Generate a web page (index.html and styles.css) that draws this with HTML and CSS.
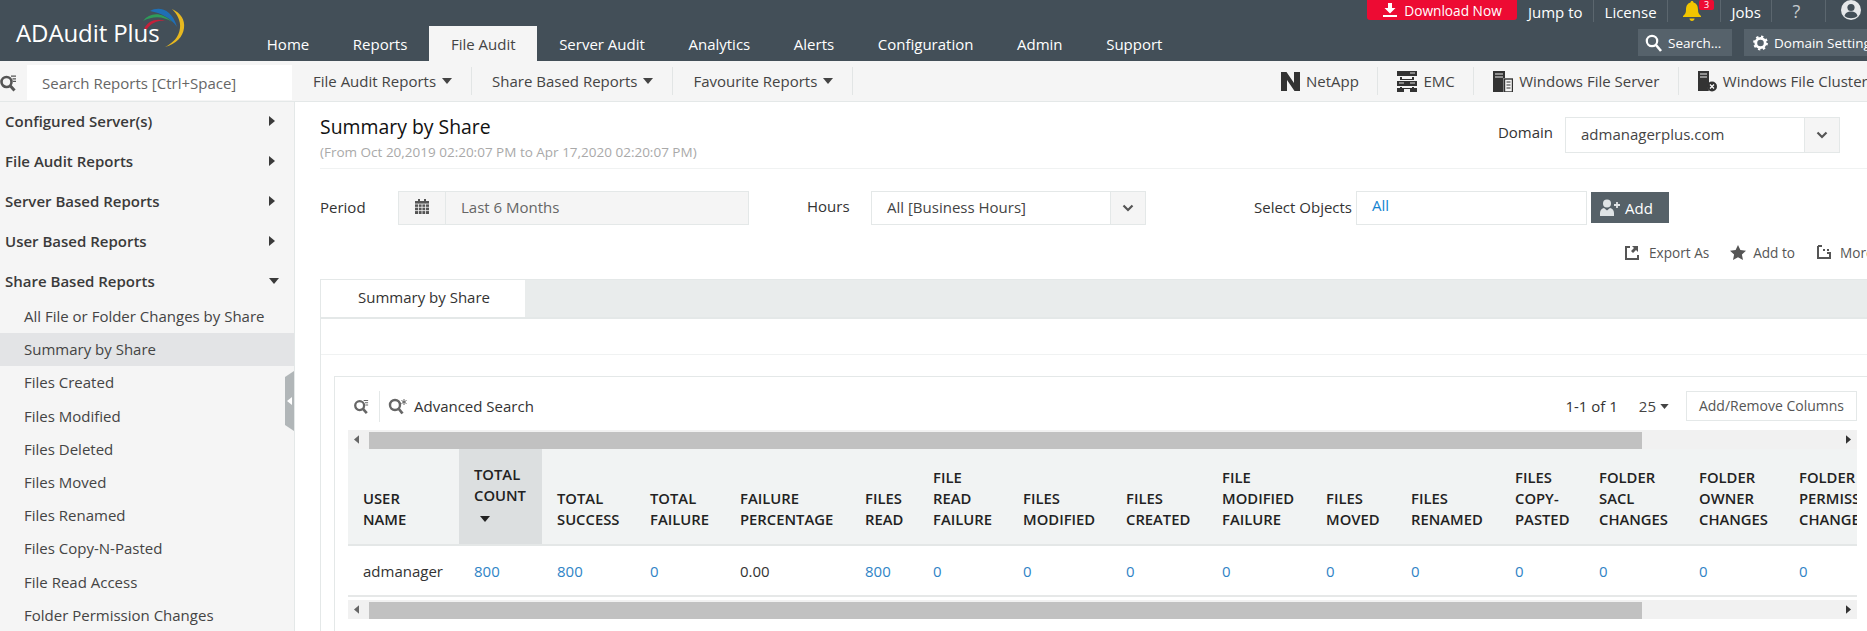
FILE: index.html
```html
<!DOCTYPE html>
<html lang="en">
<head>
<meta charset="utf-8">
<title>ADAudit Plus - Summary by Share</title>
<link rel="stylesheet" href="styles.css">
</head>
<body>
<svg class="defs" width="0" height="0">
  <symbol id="i-qsearch" viewBox="0 0 18 18">
    <circle cx="7.5" cy="8" r="5" fill="none" stroke="currentColor" stroke-width="2.6"/>
    <path d="M11 11.5l4.5 5" stroke="currentColor" stroke-width="3" fill="none"/>
    <path d="M12 2.2h5M13.5 4.8h3.5M14 7.3h3" stroke="currentColor" stroke-width="1.2" fill="none"/>
  </symbol>
  <symbol id="i-caret" viewBox="0 0 10 6"><path d="M0 0h10L5 6z" fill="currentColor"/></symbol>
  <symbol id="i-right" viewBox="0 0 6 10"><path d="M0 0l6 5-6 5z" fill="currentColor"/></symbol>
  <symbol id="i-chev" viewBox="0 0 12 8"><path d="M1.5 1.5L6 6l4.500-4.500" fill="none" stroke="currentColor" stroke-width="2.2"/></symbol>
</svg>

<header class="topbar">
  <div class="logo">
    <span class="logo-text">ADAudit Plus</span>
    <svg class="logo-arc" width="46" height="44" viewBox="0 0 46 44">
      <path d="M3 23C7 14 16 12 25 15c-7-1-14 1-19 8z" fill="#c4213a"/>
      <path d="M2 15C9 6 21 6 31 16c-9-6-19-6-29-1z" fill="#2f9c5a"/>
      <path d="M9 5c9-5 22-2 27 16C30 12 20 7 9 5z" fill="#1f6fb5"/>
      <path d="M31 3c9 4 13 11 12 19-1 9-8 16-19 19 8-4 14-10 15-19 1-7-3-14-8-19z" fill="#e7b820"/>
    </svg>
  </div>
  <nav class="mainnav">
    <a class="nav-item">Home</a>
    <a class="nav-item">Reports</a>
    <a class="nav-item active">File Audit</a>
    <a class="nav-item">Server Audit</a>
    <a class="nav-item">Analytics</a>
    <a class="nav-item">Alerts</a>
    <a class="nav-item">Configuration</a>
    <a class="nav-item">Admin</a>
    <a class="nav-item">Support</a>
  </nav>
  <div class="topright">
    <div class="toplinks">
      <a class="download">
        <svg width="16" height="14" viewBox="0 0 16 14"><path d="M6 0h4v5h3.500L8 10.500 2.500 5H6zM1 12h14v2H1z" fill="#fff"/></svg>
        Download Now
      </a>
      <a class="toplink jump">Jump to</a>
      <a class="toplink">License</a>
      <a class="toplink bell">
        <svg width="18" height="20" viewBox="0 0 18 20"><path d="M9 0c1 0 1.500.7 1.500 1.500C14 2.500 15 5.500 15 9c0 3 1 4.500 3 6v1H0v-1c2-1.500 3-3 3-6 0-3.500 1-6.500 4.500-7.500C7.500.7 8 0 9 0zM6.500 17.500h5C11.500 19 10.500 20 9 20s-2.500-1-2.500-2.500z" fill="#f2c600"/></svg>
        <span class="badge">3</span>
      </a>
      <a class="toplink">Jobs</a>
      <a class="toplink help">?</a>
      <a class="toplink user">
        <svg width="20" height="20" viewBox="0 0 20 20"><circle cx="10" cy="10" r="10" fill="#e6e8ea"/><circle cx="10" cy="7.500" r="3.600" fill="#434f58"/><path d="M3.500 16c1-3.500 3.500-4.500 6.500-4.500s5.500 1 6.500 4.500c-3.500 3-9.500 3-13 0z" fill="#434f58"/></svg>
      </a>
    </div>
    <div class="topbtns">
      <a class="topbtn search-btn">
        <svg width="17" height="18" viewBox="0 0 17 18"><circle cx="7" cy="7" r="5.200" fill="none" stroke="#fff" stroke-width="2.200"/><path d="M11 11l5 6" stroke="#fff" stroke-width="2.600"/></svg>
        Search...
      </a>
      <a class="topbtn domain-btn">
        <svg width="15" height="16" viewBox="0 0 16 16"><circle cx="8" cy="8" r="5" fill="none" stroke="#fff" stroke-width="3"/><circle cx="8" cy="8" r="6.800" fill="none" stroke="#fff" stroke-width="2.200" stroke-dasharray="2.500 2.800"/></svg>
        Domain Settings
      </a>
    </div>
  </div>
</header>

<div class="toolbar">
  <div class="qsearch">
    <svg class="qs-icon" width="18" height="18"><use href="#i-qsearch"/></svg>
    <div class="qs-input">Search Reports [Ctrl+Space]</div>
  </div>
  <div class="menu-item first">File Audit Reports <svg width="10" height="6"><use href="#i-caret"/></svg></div>
  <div class="menu-item">Share Based Reports <svg width="10" height="6"><use href="#i-caret"/></svg></div>
  <div class="menu-item">Favourite Reports <svg width="10" height="6"><use href="#i-caret"/></svg></div>
  <div class="servers">
    <div class="srv">
      <svg width="19" height="21" viewBox="0 0 19 21"><path d="M0 1h5.500L13 12V1h6v19h-5.500L6 9v11H0z" fill="#333"/></svg>
      NetApp
    </div>
    <div class="srv">
      <svg width="20" height="21" viewBox="0 0 20 21"><path d="M0 0h20v5H0zM3 6h2v2h10V6h2v3H3zM0 10h20v5H0zM3 16h2v1h10v-1h2v2H3zM0 17h7v4H0zM13 17h7v4h-7z" fill="#333"/><path d="M13 2h5M2 12h5M13 12h5" stroke="#ddd" stroke-width="1" fill="none"/></svg>
      EMC
    </div>
    <div class="srv">
      <svg width="20" height="21" viewBox="0 0 20 21"><path d="M0 0h12v7h-1.500v14H0z" fill="#333"/><path d="M2 3h8M2 6h8" stroke="#eee" stroke-width="1.200"/><rect x="11.500" y="8" width="8" height="13" fill="#f5f5f5" stroke="#333" stroke-width="1.400"/><path d="M13.500 11h4M13.500 14h4M13.500 17h4" stroke="#333" stroke-width="1.200"/></svg>
      Windows File Server
    </div>
    <div class="srv">
      <svg width="19" height="21" viewBox="0 0 19 21"><path d="M0 0h11v13a6 6 0 0 0 0 7H0z" fill="#333"/><path d="M2 3h7M2 6h7" stroke="#eee" stroke-width="1.200"/><circle cx="14" cy="15.500" r="5" fill="#333"/><path d="M12 13.500l4 4m0-4l-4 4" stroke="#fff" stroke-width="1.200"/></svg>
      Windows File Cluster
    </div>
  </div>
</div>

<div class="layout">
  <aside class="sidebar">
    <div class="side-head">Configured Server(s)<svg width="6" height="10"><use href="#i-right"/></svg></div>
    <div class="side-head">File Audit Reports<svg width="6" height="10"><use href="#i-right"/></svg></div>
    <div class="side-head">Server Based Reports<svg width="6" height="10"><use href="#i-right"/></svg></div>
    <div class="side-head">User Based Reports<svg width="6" height="10"><use href="#i-right"/></svg></div>
    <div class="side-head open">Share Based Reports<svg width="10" height="6"><use href="#i-caret"/></svg></div>
    <ul class="side-list">
      <li>All File or Folder Changes by Share</li>
      <li class="current">Summary by Share</li>
      <li>Files Created</li>
      <li>Files Modified</li>
      <li>Files Deleted</li>
      <li>Files Moved</li>
      <li>Files Renamed</li>
      <li>Files Copy-N-Pasted</li>
      <li>File Read Access</li>
      <li>Folder Permission Changes</li>
    </ul>
    <div class="collapse"><svg width="5" height="8" viewBox="0 0 5 8"><path d="M5 0v8L0 4z" fill="#fff"/></svg></div>
  </aside>

  <main class="content">
    <div class="title-row">
      <div>
        <h1>Summary by Share</h1>
        <p class="range">(From Oct 20,2019 02:20:07 PM to Apr 17,2020 02:20:07 PM)</p>
      </div>
      <div class="domain">
        <span class="domain-label">Domain</span>
        <div class="select domain-select"><span class="select-val">admanagerplus.com</span><span class="select-arrow"><svg width="12" height="8"><use href="#i-chev"/></svg></span></div>
      </div>
    </div>

    <div class="filters">
      <span class="f-label period-label">Period</span>
      <div class="period">
        <span class="period-icon"><svg width="14" height="15" viewBox="0 0 14 15"><path d="M3 0h2v2h4V0h2v2h3v13H0V2h3z" fill="#555"/><path d="M0 5h14M3.500 5v10M7 5v10M10.500 5v10M0 8.300h14M0 11.600h14" stroke="#f5f5f5" stroke-width=".8"/></svg></span>
        <span class="period-val">Last 6 Months</span>
      </div>
      <span class="f-label hours-label">Hours</span>
      <div class="select hours-select"><span class="select-val">All [Business Hours]</span><span class="select-arrow"><svg width="12" height="8"><use href="#i-chev"/></svg></span></div>
      <span class="f-label objects-label">Select Objects</span>
      <div class="objects">All</div>
      <a class="add-btn">
        <svg width="20" height="17" viewBox="0 0 20 17"><circle cx="7" cy="4.500" r="4" fill="#dfe3e5"/><path d="M0 17v-3c0-3 2-4.500 4-5l3 2.500L10 9c2 .5 4 2 4 5v3z" fill="#dfe3e5"/><path d="M14 6h6M17 3v6" stroke="#dfe3e5" stroke-width="1.800"/></svg>
        Add
      </a>
    </div>

    <div class="actions">
      <a class="action export">
        <svg width="14" height="15" viewBox="0 0 14 15"><path d="M5 2H1v12h12v-4" fill="none" stroke="#555" stroke-width="2"/><path d="M7 1h6v6l-2-2-3 3-2-2 3-3z" fill="#555"/></svg>
        Export As
      </a>
      <a class="action star">
        <svg width="16" height="15" viewBox="0 0 16 15"><path d="M8 0l2.400 5 5.600.700-4.100 3.800 1.100 5.500L8 12.300 3 15l1.100-5.500L0 5.700 5.600 5z" fill="#555"/></svg>
        Add to
      </a>
      <a class="action more">
        <svg width="14" height="14" viewBox="0 0 14 14"><path d="M1 1v12h12V7" fill="none" stroke="#555" stroke-width="2"/><path d="M1 1h4M6 5h2M10 5h2M10 8h2" stroke="#555" stroke-width="2" fill="none"/></svg>
        More
      </a>
    </div>

    <div class="tabbar"><div class="tab">Summary by Share</div></div>

    <div class="panel">
      <div class="panel-line"></div>
      <section class="grid-box">
        <div class="grid-tools">
          <svg class="gt-icon" width="16" height="17"><use href="#i-qsearch"/></svg>
          <span class="gt-sep"></span>
          <svg class="gt-icon" width="19" height="17" viewBox="0 0 19 17"><circle cx="7" cy="7" r="5" fill="none" stroke="currentColor" stroke-width="2.400"/><path d="M10.500 10.500l4 5" stroke="currentColor" stroke-width="2.800"/><path d="M16 1v6M13.500 2.500l5 3m0-3l-5 3" stroke="currentColor" stroke-width="1"/></svg>
          <span class="gt-adv">Advanced Search</span>
          <span class="pager">1-1 of 1</span>
          <span class="perpage">25 <svg width="9" height="5"><use href="#i-caret"/></svg></span>
          <a class="columns-btn">Add/Remove Columns</a>
        </div>

        <div class="scroller">
          <div class="hscroll"><svg width="5" height="9" viewBox="0 0 6 10"><path d="M6 0v10L0 5z" fill="#666"/></svg><span class="thumb"></span><svg width="5" height="9"><use href="#i-right"/></svg></div>
          <div class="table-clip">
            <table class="report">
              <colgroup>
                <col class="c111"><col class="c83"><col class="c93"><col class="c90"><col class="c125"><col class="c68"><col class="c90"><col class="c103"><col class="c96"><col class="c104"><col class="c85"><col class="c104"><col class="c84"><col class="c100"><col class="c100"><col class="c100">
              </colgroup>
              <thead>
                <tr>
                  <th>USER<br>NAME</th>
                  <th class="sorted">TOTAL<br>COUNT<br><svg width="10" height="6"><use href="#i-caret"/></svg></th>
                  <th>TOTAL<br>SUCCESS</th>
                  <th>TOTAL<br>FAILURE</th>
                  <th>FAILURE<br>PERCENTAGE</th>
                  <th>FILES<br>READ</th>
                  <th>FILE<br>READ<br>FAILURE</th>
                  <th>FILES<br>MODIFIED</th>
                  <th>FILES<br>CREATED</th>
                  <th>FILE<br>MODIFIED<br>FAILURE</th>
                  <th>FILES<br>MOVED</th>
                  <th>FILES<br>RENAMED</th>
                  <th>FILES<br>COPY-<br>PASTED</th>
                  <th>FOLDER<br>SACL<br>CHANGES</th>
                  <th>FOLDER<br>OWNER<br>CHANGES</th>
                  <th>FOLDER<br>PERMISSION<br>CHANGES</th>
                </tr>
              </thead>
              <tbody>
                <tr>
                  <td class="name">admanager</td>
                  <td><a>800</a></td>
                  <td><a>800</a></td>
                  <td><a>0</a></td>
                  <td class="plain">0.00</td>
                  <td><a>800</a></td>
                  <td><a>0</a></td>
                  <td><a>0</a></td>
                  <td><a>0</a></td>
                  <td><a>0</a></td>
                  <td><a>0</a></td>
                  <td><a>0</a></td>
                  <td><a>0</a></td>
                  <td><a>0</a></td>
                  <td><a>0</a></td>
                  <td><a>0</a></td>
                </tr>
              </tbody>
            </table>
          </div>
          <div class="hscroll bottom"><svg width="5" height="9" viewBox="0 0 6 10"><path d="M6 0v10L0 5z" fill="#666"/></svg><span class="thumb"></span><svg width="5" height="9"><use href="#i-right"/></svg></div>
        </div>
      </section>
    </div>
  </main>
</div>
</body>
</html>
```

FILE: styles.css
```css
* { box-sizing: border-box; }
html, body { margin: 0; height: 631px; overflow: hidden; }
body { width: 1867px; font-family: "Open Sans", "Liberation Sans", sans-serif; font-size: 15px; color: #333; background: #fff; }
.defs { position: absolute; }
a { color: inherit; text-decoration: none; }
svg { flex: none; }

/* header */
.topbar { display: flex; height: 61px; background: #434f58; color: #fff; overflow: hidden; }
.logo { position: relative; width: 245px; flex: none; }
.logo-text { position: absolute; left: 16px; top: 17px; font-size: 24px; line-height: 32px; font-weight: 500; letter-spacing: -.1px; white-space: nowrap; }
.logo-arc { position: absolute; left: 141px; top: 6px; }
.mainnav { display: flex; align-self: flex-end; height: 35px; width: 1122px; flex: none; }
.nav-item { padding: 0 21.800px; line-height: 36px; white-space: nowrap; }
.nav-item.active { background: #f5f5f5; color: #444; height: 35px; }
.topright { width: 500px; flex: none; }
.toplinks { display: flex; height: 22px; }
.download { display: flex; align-items: center; justify-content: center; gap: 6px; width: 150px; height: 20px; background: #ed0b33; border-radius: 0 0 3px 3px; font-size: 13.700px; flex: none; }
.toplink { padding: 0 10.500px; height: 22px; line-height: 24px; border-right: 1px solid #5b666e; white-space: nowrap; flex: none; }
.jump { padding-left: 11px; }
.bell { position: relative; width: 53px; padding-left: 15px; }
.bell svg { margin-top: 1px; display: block; }
.badge { position: absolute; left: 31px; top: 0; width: 15px; height: 10px; background: #ed0b33; border-radius: 2px; font-size: 9px; line-height: 10px; text-align: center; }
.help { width: 54px; padding-left: 20px; font-size: 18px; color: #c5cacd; line-height: 22px; }
.user { border-right: 0; padding-left: 15px; }
.user svg { display: block; }
.topbtns { display: flex; gap: 12px; margin-top: 7px; padding-left: 271px; }
.topbtn { display: flex; align-items: center; gap: 6px; height: 27px; background: #56626b; white-space: nowrap; flex: none; font-size: 13.500px; padding-left: 7px; }
.search-btn { width: 94px; }
.domain-btn { width: 140px; padding-left: 9px; }

/* toolbar */
.toolbar { display: flex; align-items: center; height: 41px; background: #f5f5f5; border-bottom: 1px solid #e4e8e8; }
.qsearch { display: flex; align-items: center; width: 295px; height: 35px; flex: none; margin-top: 3px; }
.qs-icon { margin-left: -1px; width: 18px; color: #555; margin-right: 10px; }
.qs-input { width: 265px; height: 35px; line-height: 36px; background: #fff; padding-left: 15px; color: #666; }
.menu-item { display: flex; align-items: center; gap: 6px; height: 28px; padding: 0 19px 0 20px; border-right: 1px solid #e2e5e5; white-space: nowrap; color: #444; flex: none; }
.menu-item.first { padding-left: 18px; }
.servers { display: flex; margin-left: auto; width: 605px; flex: none; overflow: hidden; }
.srv { display: flex; align-items: center; gap: 6px; height: 28px; padding: 0 18.500px 0 19px; border-right: 1px solid #e2e5e5; white-space: nowrap; color: #444; flex: none; }

/* layout */
.layout { display: flex; height: 529px; }
.sidebar { position: relative; width: 295px; flex: none; background: #f5f5f5; border-right: 1px solid #e4e8e8; }
.side-head { display: flex; align-items: center; justify-content: space-between; height: 40px; padding: 0 19px 3px 5px; font-weight: 600; color: #3a3a3a; }
.side-head.open { padding-right: 15px; }
.side-list { list-style: none; margin: -2px 0 0; padding: 0; }
.side-list li { height: 33.200px; line-height: 33px; padding-left: 24px; color: #444; white-space: nowrap; }
.side-list li.current { background: #e3e4e6; }
.collapse { position: absolute; right: 0; top: 269px; width: 9px; height: 60px; background: #b1b6b8; clip-path: polygon(0 10%, 100% 0, 100% 100%, 0 90%); display: flex; align-items: center; padding-left: 2px; }
.content { flex: 1; min-width: 0; overflow: hidden; padding-left: 25px; }

/* title */
.title-row { display: flex; justify-content: space-between; height: 67px; border-bottom: 1px solid #f0f2f2; padding-right: 27px; }
h1 { margin: 12px 0 0; font-size: 19.400px; line-height: 26px; font-weight: 500; color: #111; }
.range { margin: 4px 0 0; font-size: 13.500px; line-height: 16px; color: #a9a9a9; }
.domain { display: flex; align-items: flex-start; margin-top: 15px; }
.domain-label { line-height: 30px; margin-right: 12px; color: #333; }
.select { display: flex; background: #fff; border: 1px solid #e4e8e8; }
.select-val { flex: 1; padding-left: 15px; white-space: nowrap; color: #444; }
.select-arrow { display: flex; align-items: center; justify-content: center; width: 35px; background: #f5f5f5; border-left: 1px solid #e4e8e8; color: #555; }
.domain-select { width: 275px; height: 36px; line-height: 32px; }

/* filters */
.filters { display: flex; align-items: center; height: 35px; margin-top: 21px; }
.f-label { white-space: nowrap; color: #333; }
.period-label { width: 78px; padding-bottom: 2px; }
.period { display: flex; width: 351px; height: 34px; background: #f5f5f5; border: 1px solid #e4e8e8; color: #666; line-height: 31px; }
.period-icon { display: flex; align-items: center; justify-content: center; width: 47px; border-right: 1px solid #e4e8e8; padding-bottom: 3px; }
.period-val { padding-left: 15px; }
.hours-label { margin-left: 58px; width: 64px; padding-bottom: 4px; }
.hours-select { width: 275px; height: 34px; line-height: 31px; }
.objects-label { margin-left: 108px; width: 102px; padding-bottom: 2px; }
.objects { width: 231px; height: 34px; border: 1px solid #e4e8e8; padding-left: 15px; line-height: 26px; color: #1583d0; }
.add-btn { display: flex; align-items: center; gap: 5px; width: 78px; height: 31px; margin-left: 4px; background: #566168; color: #fff; padding-left: 9px; }

/* actions */
.actions { display: flex; justify-content: flex-end; height: 24px; margin-top: 15px; overflow: hidden; }
.action { display: flex; align-items: center; gap: 10px; white-space: nowrap; color: #555; font-size: 13.600px; flex: none; }
.export { margin-right: 21px; }
.star { gap: 7px; margin-right: 22px; }
.more { gap: 9px; width: 50px; }

/* tabs */
.tabbar { height: 40px; margin-top: 15px; background: #e9ecec; border-top: 1px solid #e4e8e8; border-left: 1px solid #e4e8e8; border-bottom: 2px solid #e4e8e8; }
.tab { width: 204px; height: 37px; background: #fff; line-height: 35px; padding-left: 37px; color: #333; }
.panel { border-left: 1px solid #e4e8e8; height: 320px; padding-left: 13px; }
.panel-line { height: 36px; border-bottom: 1px solid #f0f2f2; margin-left: -13px; }
.grid-box { margin-top: 21px; border-top: 1px solid #e4e8e8; border-left: 1px solid #e4e8e8; height: 260px; padding: 0 10px 0 13px; width: 1533px; }

/* grid tools */
.grid-tools { display: flex; align-items: center; height: 53px; padding-top: 5px; color: #444; }
.gt-icon { color: #666; flex: none; margin-left: 5px; }
.gt-sep { width: 1px; height: 31px; background: #e4e8e8; margin: 0 8px 0 10px; }
.gt-icon + .gt-sep + .gt-icon { margin-left: 0; }
.gt-adv { margin-left: 7px; color: #333; }
.pager { margin-left: auto; color: #333; }
.perpage { display: flex; align-items: center; gap: 4px; margin-left: 21px; }
.columns-btn { width: 171px; height: 30px; line-height: 28px; text-align: center; border: 1px solid #e4e8e8; margin-left: 17px; font-size: 14px; color: #555; }

/* table */
.scroller { width: 1509px; }
.hscroll { display: flex; align-items: center; justify-content: space-between; height: 19px; background: #f1f1f1; padding: 0 6px 0 6px; position: relative; }
.hscroll .thumb { position: absolute; left: 21px; top: 2px; width: 1273px; height: 17px; background: #c1c1c1; }
.hscroll.bottom { margin-top: 3px; }
.table-clip { overflow: hidden; }
.report { border-collapse: collapse; table-layout: fixed; width: 1536px; }
.c111 { width: 111px; } .c83 { width: 83px; } .c93 { width: 93px; } .c90 { width: 90px; } .c125 { width: 125px; } .c68 { width: 68px; } .c103 { width: 103px; } .c96 { width: 96px; } .c104 { width: 104px; } .c85 { width: 85px; } .c84 { width: 84px; } .c100 { width: 100px; }
.report th { height: 96px; background: #f1f3f3; border-bottom: 2px solid #e4e7e7; padding: 0 0 14px 15px; text-align: left; vertical-align: bottom; font-size: 14.800px; line-height: 21px; font-weight: 600; color: #222; white-space: nowrap; overflow: hidden; }
.report th.sorted { background: #dcdfe0; padding-bottom: 17px; }
.report th svg { margin-left: 6px; display: inline-block; }
.report td { height: 51px; padding: 1px 0 0 15px; border-bottom: 2px solid #e6e8e8; white-space: nowrap; }
.report td a { color: #2f84c6; }
.report td.name, .report td.plain { color: #333; }
```
